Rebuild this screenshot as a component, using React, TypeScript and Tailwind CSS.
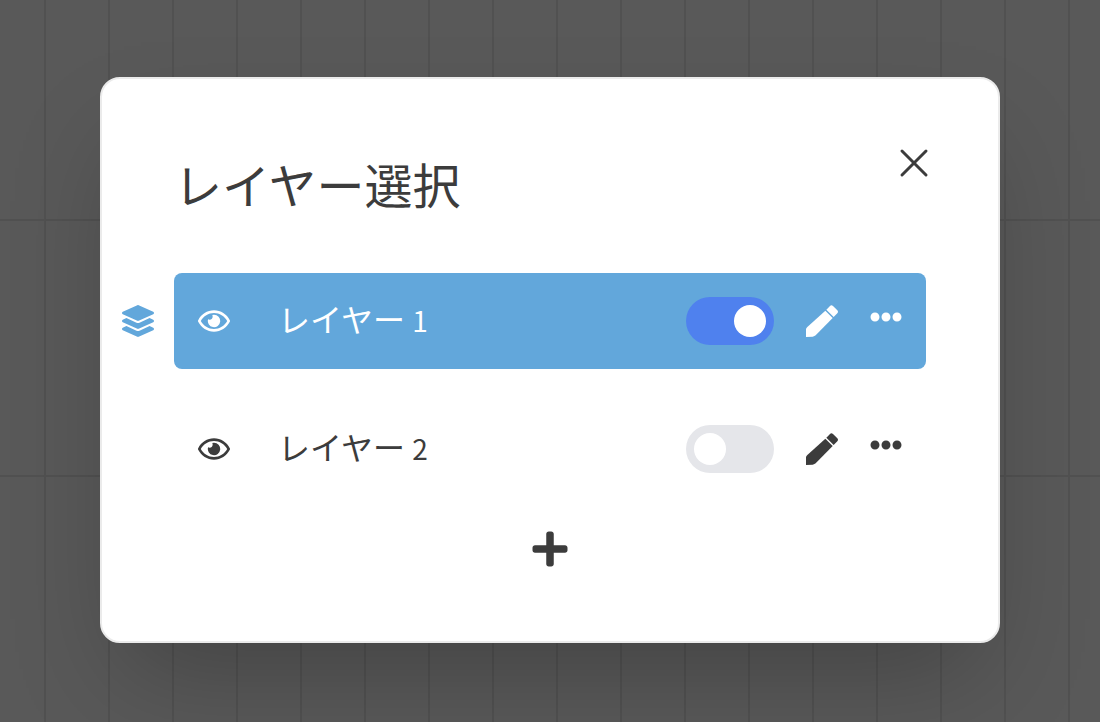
import { FC, useState } from 'react'
import { X } from 'lucide-react'
import { FaEllipsisH, FaLayerGroup, FaPlus, FaRegEye } from 'react-icons/fa'

interface Layer {
	id: number
	visible: boolean
}

const PencilIcon: FC = () => (
	<svg viewBox="0 0 96 96" fill="currentColor" className="size-8">
		<path d="M58 17 80 39 29 91Q26 94 20 95L0 96V72Q1 69 4 66Z" />
		<path d="M61 14 72 3Q76-2 81 3L94 16Q98 20 94 25L83 36Z" />
	</svg>
)

interface LayerRowProps {
	layer: Layer
	selected: boolean
	onToggle: () => void
}

const LayerRow: FC<LayerRowProps> = ({ layer, selected, onToggle }) => {
	const switchId = `layer-${layer.id}`

	return (
		<li className="flex items-center gap-5">
			<div className="w-8 shrink-0 text-[#62a7db]">
				{selected && <FaLayerGroup className="size-8" />}
			</div>
			<div
				className={`flex h-24 flex-1 items-center gap-8 rounded-lg px-6 ${
					selected ? 'bg-[#62a7db] text-white' : 'text-[#3c3c3c]'
				}`}
			>
				<button type="button" aria-label="表示">
					<FaRegEye className="size-8" />
				</button>
				<label
					htmlFor={switchId}
					className="ml-4 flex-1 pb-1 text-[32px] leading-10"
				>
					レイヤー <span className="text-[28px]">{layer.id}</span>
				</label>
				<input
					id={switchId}
					type="checkbox"
					role="switch"
					checked={layer.visible}
					onChange={onToggle}
					className="h-12 w-22 shrink-0 cursor-pointer appearance-none rounded-full bg-[#e5e6ea] p-2 before:block before:size-8 before:rounded-full before:bg-white checked:bg-[#4f81ee] checked:before:translate-x-10"
				/>
				<button type="button" aria-label="編集">
					<PencilIcon />
				</button>
				<button type="button" aria-label="メニュー" className="pb-2">
					<FaEllipsisH className="size-8" />
				</button>
			</div>
		</li>
	)
}

export default function App() {
	const [layers, setLayers] = useState<Layer[]>([
		{ id: 1, visible: true },
		{ id: 2, visible: false },
	])

	const toggle = (id: number) =>
		setLayers(
			layers.map(l => (l.id === id ? { ...l, visible: !l.visible } : l)),
		)

	const addLayer = () =>
		setLayers([...layers, { id: layers.length + 1, visible: false }])

	return (
		<div className="flex min-h-screen items-center justify-center overflow-hidden bg-[#595959] bg-[linear-gradient(to_right,#515151_2px,transparent_2px),linear-gradient(to_bottom,#515151_2px,transparent_2px)] bg-[size:64px_256px] bg-[position:44px_219px] px-6 pb-0.5 font-['Noto_Sans_CJK_JP',sans-serif] text-[#3c3c3c]">
			<div
				role="dialog"
				aria-labelledby="dialog-title"
				className="w-full max-w-[900px] rounded-[20px] border-2 border-[#ebebeb] bg-white pt-15 pb-18 shadow-[0_50px_100px_-24px_rgba(0,0,0,0.25)]"
			>
				<header className="flex items-start justify-between pr-15 pl-18">
					<h1 id="dialog-title" className="mt-2 text-5xl leading-[72px]">
						レイヤー選択
					</h1>
					<button type="button" aria-label="閉じる">
						<X size={48} strokeWidth={1.5} />
					</button>
				</header>
				<ul className="mt-[54px] flex flex-col gap-8 pr-18 pl-5">
					{layers.map(layer => (
						<LayerRow
							key={layer.id}
							layer={layer}
							selected={layer.id === 1}
							onToggle={() => toggle(layer.id)}
						/>
					))}
				</ul>
				<div className="mt-8 flex justify-center">
					<button type="button" aria-label="レイヤーを追加" onClick={addLayer}>
						<FaPlus className="size-10" />
					</button>
				</div>
			</div>
		</div>
	)
}
